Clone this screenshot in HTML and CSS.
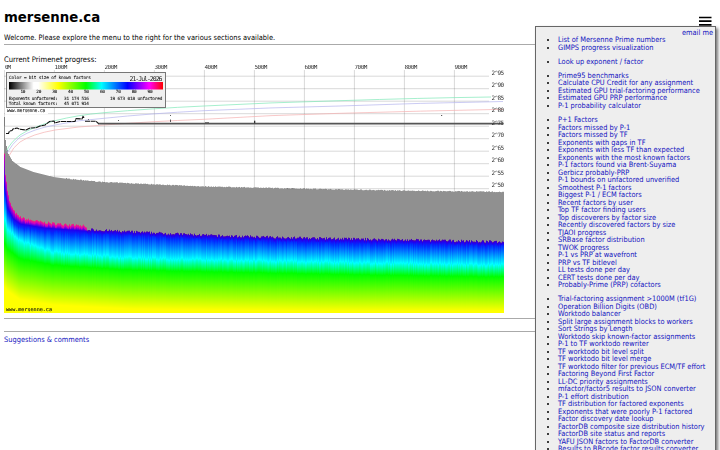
FILE: index.html
```
<!DOCTYPE html>
<html lang="en">
<head>
  <meta charset="UTF-8">
  <title>mersenne.ca</title>
  <meta name="viewport" content="width=device-width, initial-scale=1.0">
  <link rel="stylesheet" href="styles.css">
</head>
<body>

<h1>mersenne.ca</h1>
<p class="welcome">Welcome. Please explore the menu to the right for the various sections available.</p>
<hr>

<div class="progress">
  <p>Current Primenet progress:</p>
  <div class="chart">
    <canvas id="bits" width="500" height="248"></canvas>
    <svg class="overlay" viewBox="4 65 500 248">
      <g id="grid" stroke="#000" stroke-opacity=".22" stroke-width=".7"></g>
      <g fill="none" stroke-width=".7">
        <path stroke="#7fe8b8" d="M6.500 151Q10 143 20 135Q32 127 55 120.700Q77 115 104 112.700Q150 108.500 204 106Q270 102.500 340 100.700Q420 98 491 97"/>
        <path stroke="#b4b4ee" d="M7 153Q12 144 20 137Q33 129 55 125Q78 120 104 118.300Q150 113.500 204 110.700Q270 107.500 340 106Q420 103 503 101.500"/>
        <path stroke="#f5b0b0" d="M9 156Q13 147 20 142Q32 134 55 130Q78 126.500 104 125Q150 121.500 204 119.300Q270 115 340 113.300Q420 111 503 109.300"/>
      </g>
      <path d="M98 123.700H503" stroke="#555" stroke-width="1.800"/>
      <path fill="none" stroke="#111" stroke-width="1.100" stroke-dasharray="5 .6" d="M6 133.500H8.500L9.500 131L12 130.500L13 129L17 128L20 129.300L26 130L30 128L36 127.700L40 126L45 125L49.500 121.500L54 121L55 123L60 121.500H75L76 118.600L82 119L83 116.500L84.500 118M85 121.300H96L98.500 123.700"/>
      <g fill="#333">
        <rect x="170.100" y="115" width=".8" height="1"/><rect x="170.100" y="119.500" width=".8" height="2.500"/>
        <rect x="118" y="120" width=".8" height="1"/><rect x="88" y="119" width=".8" height=".8"/>
        <rect x="254" y="120.700" width="1.300" height="2.500"/><rect x="441" y="115" width="1.200" height=".8"/>
        <rect x="205" y="122" width="4" height=".6"/>
      </g>
      <g id="labels" class="labels"></g>
      <rect x="5" y="108" width="43" height="6" fill="#fff"/>
      <text class="site" x="7" y="112.300" textLength="38" lengthAdjust="spacingAndGlyphs">www.mersenne.ca</text>
      <text class="site" x="6" y="311.300" textLength="46" lengthAdjust="spacingAndGlyphs">www.mersenne.ca</text>
      <defs>
        <linearGradient id="scale">
          <stop offset="0" stop-color="#000"/>
          <stop offset=".16" stop-color="#fff"/>
          <stop offset=".19" stop-color="#fff"/>
          <stop offset=".32" stop-color="#ff0"/>
          <stop offset=".5" stop-color="#0f0"/>
          <stop offset=".6" stop-color="#0ff"/>
          <stop offset=".77" stop-color="#00f"/>
          <stop offset=".91" stop-color="#f0f"/>
          <stop offset=".98" stop-color="#f03"/>
          <stop offset="1" stop-color="#f00"/>
        </linearGradient>
      </defs>
      <rect x="6.500" y="72.500" width="159" height="35" fill="#f0f0f0" stroke="#777"/>
      <rect x="9" y="82" width="154" height="7.500" fill="url(#scale)"/>
      <g id="legend" class="legend">
        <text x="9" y="78.500" textLength="82">Color = bit size of known factors</text>
        <text class="date" x="129.500" y="81" textLength="33">21-Jul-2026</text>
        <text x="8.700" y="100" textLength="49">Exponents unfactored:</text>
        <text x="64" y="100" textLength="25">31 174 516</text>
        <text x="110" y="100" textLength="52.500">19 673 018 unfactored</text>
        <text x="8.700" y="105" textLength="49">Total known factors:</text>
        <text x="64" y="105" textLength="25">45 071 914</text>
      </g>
    </svg>
  </div>
</div>
<hr class="tight">
<hr class="last">
<a class="suggest" href="#">Suggestions &amp; comments</a>

<svg class="burger" viewBox="0 0 13 10">
  <path d="M0 1.500H12.500M0 5.200H12.500M0 8.900H12.500" stroke="#000" stroke-width="1.700"/>
</svg>
<div class="menu">
  <a class="email" href="#">email me</a>
  <ul>
    <li><a href="#">List of Mersenne Prime numbers</a></li>
    <li><a href="#">GIMPS progress visualization</a></li>
  </ul>
  <ul>
    <li><a href="#">Look up exponent / factor</a></li>
  </ul>
  <ul>
    <li><a href="#">Prime95 benchmarks</a></li>
    <li><a href="#">Calculate CPU Credit for any assignment</a></li>
    <li><a href="#">Estimated GPU trial-factoring performance</a></li>
    <li><a href="#">Estimated GPU PRP performance</a></li>
    <li><a href="#">P-1 probability calculator</a></li>
  </ul>
  <ul>
    <li><a href="#">P+1 Factors</a></li>
    <li><a href="#">Factors missed by P-1</a></li>
    <li><a href="#">Factors missed by TF</a></li>
    <li><a href="#">Exponents with gaps in TF</a></li>
    <li><a href="#">Exponents with less TF than expected</a></li>
    <li><a href="#">Exponents with the most known factors</a></li>
    <li><a href="#">P-1 factors found via Brent-Suyama</a></li>
    <li><a href="#">Gerbicz probably-PRP</a></li>
    <li><a href="#">P-1 bounds on unfactored unverified</a></li>
    <li><a href="#">Smoothest P-1 factors</a></li>
    <li><a href="#">Biggest P-1 / ECM factors</a></li>
    <li><a href="#">Recent factors by user</a></li>
    <li><a href="#">Top TF factor finding users</a></li>
    <li><a href="#">Top discoverers by factor size</a></li>
    <li><a href="#">Recently discovered factors by size</a></li>
    <li><a href="#">TJAOI progress</a></li>
    <li><a href="#">SRBase factor distribution</a></li>
    <li><a href="#">TWOK progress</a></li>
    <li><a href="#">P-1 vs PRP at wavefront</a></li>
    <li><a href="#">PRP vs TF bitlevel</a></li>
    <li><a href="#">LL tests done per day</a></li>
    <li><a href="#">CERT tests done per day</a></li>
    <li><a href="#">Probably-Prime (PRP) cofactors</a></li>
  </ul>
  <ul>
    <li><a href="#">Trial-factoring assignment &gt;1000M (tf1G)</a></li>
    <li><a href="#">Operation Billion Digits (OBD)</a></li>
    <li><a href="#">Worktodo balancer</a></li>
    <li><a href="#">Split large assignment blocks to workers</a></li>
    <li><a href="#">Sort Strings by Length</a></li>
    <li><a href="#">Worktodo skip known-factor assignments</a></li>
    <li><a href="#">P-1 to TF worktodo rewriter</a></li>
    <li><a href="#">TF worktodo bit level split</a></li>
    <li><a href="#">TF worktodo bit level merge</a></li>
    <li><a href="#">TF worktodo filter for previous ECM/TF effort</a></li>
    <li><a href="#">Factoring Beyond First Factor</a></li>
    <li><a href="#">LL-DC priority assignments</a></li>
    <li><a href="#">mfactor/factor5 results to JSON converter</a></li>
    <li><a href="#">P-1 effort distribution</a></li>
    <li><a href="#">TF distribution for factored exponents</a></li>
    <li><a href="#">Exponents that were poorly P-1 factored</a></li>
    <li><a href="#">Factor discovery date lookup</a></li>
    <li><a href="#">FactorDB composite size distribution history</a></li>
    <li><a href="#">FactorDB site status and reports</a></li>
    <li><a href="#">YAFU JSON factors to FactorDB converter</a></li>
    <li><a href="#">Results to BBcode factor results converter</a></li>
  </ul>
</div>

<script src="chart.js"></script>
</body>
</html>
```
FILE: styles.css
```
* { box-sizing: border-box; }
html, body {
  height: 450px;
  overflow: hidden;
}
body {
  position: relative;
  margin: 0;
  padding: 9px 4px 0;
  background: #fff;
  color: #000;
  font-family: "DejaVu Sans", sans-serif;
  font-stretch: condensed;
  font-size: 7.400px;
  line-height: 8px;
}
h1 {
  margin: 0;
  font-size: 13.300px;
  font-stretch: normal;
  line-height: 17px;
}
p { margin: 0; }
a {
  color: #1212c0;
  text-decoration: none;
}
.welcome { margin-top: 8px; }
hr {
  height: 1px;
  margin: 2px 0 0;
  border: 0;
  background: #aaa;
}
.progress { padding-top: 11px; }
.progress p {
  height: 9px;
  font-size: 7.600px;
}
.chart {
  position: relative;
  width: 500px;
  height: 248px;
}
.chart canvas { display: block; }
.overlay {
  position: absolute;
  left: 0;
  top: 0;
  width: 500px;
  height: 248px;
}
.labels, .legend, .site { font-family: "DejaVu Sans Mono", monospace; }
.labels { font-size: 6px; fill: #333; }
.legend { font-size: 4.400px; fill: #222; stroke: #222; stroke-width: .1px; }
.legend .date { font-size: 6.500px; stroke: none; }
.site { font-size: 5px; fill: #111; stroke: #111; stroke-width: .1px; }
hr.tight { margin-top: 5px; }
hr.last { margin-top: 12px; }
.suggest {
  display: inline-block;
  margin-top: 4px;
}
.burger {
  position: absolute;
  left: 699px;
  top: 16px;
  width: 13px;
  height: 10px;
}
.menu {
  position: absolute;
  left: 535px;
  top: 26px;
  width: 181px;
  height: 440px;
  padding: 9px 0 0 22px;
  border: 1px solid #666;
  background: #eee;
  box-shadow: 2px 2px 3px #777;
  font-size: 7.400px;
  line-height: 7.500px;
  white-space: nowrap;
}
.menu .email {
  position: absolute;
  top: 2px;
  right: 2px;
}
.menu ul {
  margin: 0 0 6.700px;
  padding: 0;
}
.menu li { height: 7.500px; }
```
FILE: chart.js
```
const NS = 'http://www.w3.org/2000/svg';
const ctx = document.getElementById('bits').getContext('2d');

function add(parent, tag, attrs, text) {
  const el = document.createElementNS(NS, tag);
  for (const k in attrs) el.setAttribute(k, attrs[k]);
  if (text) el.textContent = text;
  document.getElementById(parent).appendChild(el);
}

// linear interpolation over a list of [x, y] points
function at(pts, x) {
  for (let i = 1; i < pts.length; i++) {
    if (x <= pts[i][0]) {
      const [x0, y0] = pts[i - 1], [x1, y1] = pts[i];
      return y0 + (y1 - y0) * (x - x0) / (x1 - x0);
    }
  }
  return pts[pts.length - 1][1];
}

let seed = 7;
function rnd() {
  seed = (seed * 16807) % 2147483647;
  return seed / 2147483647;
}

const gray = [[0, 52], [1, 75], [2, 81], [4, 89], [8, 96], [16, 102], [29, 107], [49, 112], [69, 114.7], [96, 117.3], [126, 118.7], [196, 121.7], [296, 124], [396, 126], [500, 127.3]];
const top_ = [[0, 88], [1, 110], [3, 126], [5, 137], [9, 146], [14, 152], [22, 155], [39, 158], [59, 160], [80, 161.5], [83, 165], [116, 167], [216, 171.5], [316, 174], [396, 175.5], [500, 177.5]];
const blue = [[0, 125], [3, 146], [9, 157], [16, 162], [40, 166], [80, 169], [126, 171], [216, 175], [316, 178], [500, 181]];
const cyan = [[0, 152], [3, 164], [16, 176], [49, 187], [126, 193], [316, 197], [500, 200]];
const green = [[0, 178], [3, 184], [16, 194], [49, 200], [126, 205], [316, 209], [500, 212]];
const yellow = [[0, 222], [3, 226], [16, 235], [49, 240], [126, 244], [316, 246], [500, 246]];

for (let x = 0; x < 500; x++) {
  const g = at(gray, x) - (x > 60 ? rnd() * 0.8 : 0);
  const t = at(top_, x) - rnd() * 2.5 + 0.5;
  const n = (rnd() - 0.5) * 3;
  ctx.fillStyle = '#909090';
  ctx.fillRect(x, g, 1, 248 - g);
  const grad = ctx.createLinearGradient(0, t, 0, 248);
  const stop = (y, c) => grad.addColorStop(Math.min(1, Math.max(0, (y - t) / (248 - t))), c);
  stop(t, x < 83 ? '#f03070' : '#5000b0');
  if (x < 83) stop(t + 2.5, '#d000c0');
  stop(Math.max(t + 2, at(blue, x) - 3), '#2000f0');
  stop(at(blue, x) + n + 1, '#0030ff');
  stop(at(cyan, x) + n, '#00ffff');
  stop(at(green, x) + n / 3, '#00ff00');
  stop(at(yellow, x), '#ffff00');
  stop(248, '#ffff00');
  ctx.fillStyle = grad;
  ctx.fillRect(x, t, 1, 248 - t);
}

for (let i = 0; i < 10; i++) {
  const y = 76.2 + i * 12.5;
  // grid lines only show above the gray area
  let start = 0;
  while (start < 485 && 65 + at(gray, start) < y) start++;
  add('grid', 'path', { d: `M${4 + start} ${y}H489` });
  add('labels', 'text', { x: 491.5, y: y - 1.4, textLength: 12.5 }, '2^' + (95 - i * 5));
  const x = 4.4 + i * 50;
  add('grid', 'path', { d: `M${x} 70V${65 + at(gray, x - 4)}` });
  add('labels', 'text', i ? { x: x, y: 69.3, textLength: 13 } : { x: 5, y: 69.3, textLength: 6 }, (i ? i * 100 : 0) + 'M');
}
for (let i = 1; i < 10; i++) {
  add('legend', 'text', { x: 4.5 + i * 15.9, y: 93.3, textLength: 5 }, String(i * 10));
}
```
